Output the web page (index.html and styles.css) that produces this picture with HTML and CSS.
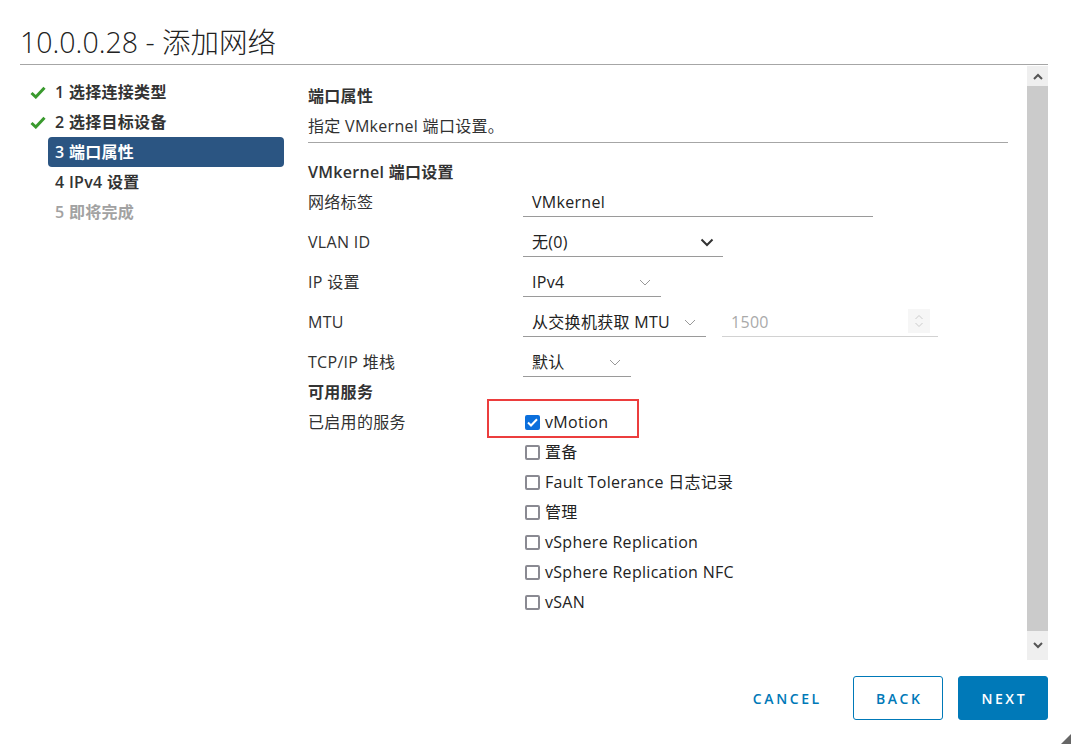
FILE: index.html
```html
<!DOCTYPE html>
<html lang="zh-CN">

<head>
	<meta charset="UTF-8">
	<title>10.0.0.28 - 添加网络</title>
	<link rel="stylesheet" href="styles.css">
</head>

<body>
	<div class="modal">
		<div class="modal-header">
			<h1>10.0.0.28 - 添加网络</h1>
		</div>

		<div class="wizard">
			<ul class="steps">
				<li class="step done">
					<span class="step-icon">
						<svg width="16" height="13" viewBox="0 0 16 13"><path d="M1.5 7 L5.8 11 L14.5 1.8" fill="none" stroke="#3a9a2e" stroke-width="3"/></svg>
					</span>
					<span class="step-label">1 选择连接类型</span>
				</li>
				<li class="step done">
					<span class="step-icon">
						<svg width="16" height="13" viewBox="0 0 16 13"><path d="M1.5 7 L5.8 11 L14.5 1.8" fill="none" stroke="#3a9a2e" stroke-width="3"/></svg>
					</span>
					<span class="step-label">2 选择目标设备</span>
				</li>
				<li class="step active">
					<span class="step-icon"></span>
					<span class="step-label">3 端口属性</span>
				</li>
				<li class="step">
					<span class="step-icon"></span>
					<span class="step-label">4 IPv4 设置</span>
				</li>
				<li class="step disabled">
					<span class="step-icon"></span>
					<span class="step-label">5 即将完成</span>
				</li>
			</ul>

			<div class="content">
				<div class="page-title">
					<div class="title-text">端口属性</div>
					<div>指定 VMkernel 端口设置。</div>
				</div>

				<div class="section-title">VMkernel 端口设置</div>

				<div class="form">
					<div class="form-row">
						<label>网络标签</label>
						<div class="field"><div class="input w-350">VMkernel</div></div>
					</div>
					<div class="form-row">
						<label>VLAN ID</label>
						<div class="field">
							<div class="select w-200">无(0)
								<svg class="chevron dark" width="14" height="9" viewBox="0 0 14 9"><path d="M1.5 1.5 L7 7 L12.5 1.5" fill="none" stroke="#333" stroke-width="2"/></svg>
							</div>
						</div>
					</div>
					<div class="form-row">
						<label>IP 设置</label>
						<div class="field">
							<div class="select w-138">IPv4
								<svg class="chevron" width="12" height="7" viewBox="0 0 12 7"><path d="M1 1 L6 6 L11 1" fill="none" stroke="#999" stroke-width="1"/></svg>
							</div>
						</div>
					</div>
					<div class="form-row">
						<label>MTU</label>
						<div class="field">
							<div class="select w-183">从交换机获取 MTU
								<svg class="chevron" width="12" height="7" viewBox="0 0 12 7"><path d="M1 1 L6 6 L11 1" fill="none" stroke="#999" stroke-width="1"/></svg>
							</div>
							<div class="input disabled w-216">1500
								<span class="spinner">
									<svg width="10" height="16" viewBox="0 0 10 16"><path d="M1.5 6 L5 2.5 L8.5 6 M1.5 10 L5 13.5 L8.5 10" fill="none" stroke="#ccc" stroke-width="1"/></svg>
								</span>
							</div>
						</div>
					</div>
					<div class="form-row">
						<label>TCP/IP 堆栈</label>
						<div class="field">
							<div class="select w-108">默认
								<svg class="chevron" width="12" height="7" viewBox="0 0 12 7"><path d="M1 1 L6 6 L11 1" fill="none" stroke="#999" stroke-width="1"/></svg>
							</div>
						</div>
					</div>
				</div>

				<div class="section-title">可用服务</div>

				<div class="services">
					<label>已启用的服务</label>
					<div class="checkbox-list">
						<div class="highlight"></div>
						<div class="checkbox checked">
							<span class="box">
								<svg width="11" height="9" viewBox="0 0 11 9"><path d="M1 4.5 L4 7.5 L10 1.2" fill="none" stroke="#fff" stroke-width="2"/></svg>
							</span>
							vMotion
						</div>
						<div class="checkbox"><span class="box"></span>置备</div>
						<div class="checkbox"><span class="box"></span>Fault Tolerance 日志记录</div>
						<div class="checkbox"><span class="box"></span>管理</div>
						<div class="checkbox"><span class="box"></span>vSphere Replication</div>
						<div class="checkbox"><span class="box"></span>vSphere Replication NFC</div>
						<div class="checkbox"><span class="box"></span>vSAN</div>
					</div>
				</div>
			</div>

			<div class="scrollbar">
				<div class="scroll-btn up">
					<svg width="10" height="7" viewBox="0 0 10 7"><path d="M1 6 L5 2 L9 6" fill="none" stroke="#555" stroke-width="2"/></svg>
				</div>
				<div class="scroll-thumb"></div>
				<div class="scroll-btn down">
					<svg width="10" height="7" viewBox="0 0 10 7"><path d="M1 1 L5 5 L9 1" fill="none" stroke="#555" stroke-width="2"/></svg>
				</div>
			</div>
		</div>

		<div class="modal-footer">
			<button class="btn btn-link">CANCEL</button>
			<button class="btn btn-outline">BACK</button>
			<button class="btn btn-primary">NEXT</button>
		</div>

		<svg class="resize-handle" width="10" height="10" viewBox="0 0 10 10"><path d="M10 0 L10 10 L0 10 Z" fill="#666"/></svg>
	</div>
</body>

</html>
```

FILE: styles.css
```css
* {
	margin: 0;
	padding: 0;
	box-sizing: border-box;
}

body {
	font-family: "Open Sans", "Noto Sans CJK SC", sans-serif;
	background: white;
	color: #313131;
	font-size: 16px;
	letter-spacing: 0.3px;
}

.modal {
	position: relative;
	width: 1071px;
	height: 744px;
	overflow: hidden;
}

.modal-header {
	margin: 0 23px 0 20px;
	padding-top: 20px;
	height: 65px;
	border-bottom: 1px solid #a6a6a6;
}

.modal-header h1 {
	font-size: 28.5px;
	font-weight: 300;
	line-height: 44px;
	color: #222;
	letter-spacing: 0;
}

.wizard {
	display: flex;
	height: 595px;
	margin: 0 23px 0 20px;
}

/* steps navigation */
.steps {
	list-style: none;
	width: 264px;
	padding-top: 12px;
}

.step {
	display: flex;
	align-items: center;
	height: 30px;
	font-weight: 600;
	color: #333;
}

.step-icon {
	width: 28px;
	padding-left: 10px;
	display: flex;
	align-items: center;
}

.step-label {
	flex: 1;
	height: 30px;
	line-height: 30px;
	padding-left: 7px;
	border-radius: 4px;
}

.step.active .step-label {
	background: #2b5582;
	color: white;
}

.step.disabled {
	color: #a2a2a2;
}

/* main content */
.content {
	flex: 1;
	padding: 16px 19px 0 24px;
}

.page-title {
	line-height: 30px;
	padding-bottom: 1px;
	border-bottom: 1px solid #a6a6a6;
}

.title-text,
.section-title {
	font-weight: 600;
	color: #333;
}

.section-title {
	line-height: 30px;
}

.page-title + .section-title {
	margin-top: 14px;
}

.form-row {
	display: flex;
	height: 30px;
	line-height: 30px;
	margin-bottom: 10px;
}

.form-row:last-child {
	margin-bottom: 0;
}

.form-row label,
.services label {
	width: 215px;
}

.field {
	display: flex;
	gap: 16px;
}

.input,
.select {
	position: relative;
	height: 30px;
	padding-left: 9px;
	border-bottom: 1px solid #9a9a9a;
	color: #222;
	white-space: nowrap;
}

.input.disabled {
	color: #aaa;
	border-bottom-color: #d2d2d2;
}

.chevron {
	position: absolute;
	right: 10px;
	top: 12px;
}

.chevron.dark {
	right: 9px;
	top: 11px;
}

.spinner {
	position: absolute;
	right: 8px;
	top: 2px;
	width: 22px;
	height: 24px;
	background: #f6f6f6;
	display: flex;
	align-items: center;
	justify-content: center;
}

.w-350 { width: 350px; }
.w-200 { width: 200px; }
.w-138 { width: 138px; }
.w-183 { width: 183px; }
.w-216 { width: 216px; }
.w-108 { width: 108px; }

/* services */
.services {
	display: flex;
	line-height: 30px;
}

.checkbox-list {
	position: relative;
	padding-left: 2px;
}

.checkbox {
	display: flex;
	align-items: center;
	height: 30px;
	color: #222;
}

.box {
	width: 15px;
	height: 15px;
	border: 2px solid #8a8a92;
	border-radius: 2px;
	margin-right: 5px;
	display: flex;
	align-items: center;
	justify-content: center;
}

.checkbox.checked .box {
	background: #0b6fdc;
	border-color: #0b6fdc;
}

.highlight {
	position: absolute;
	left: -36px;
	top: -8px;
	width: 152px;
	height: 39px;
	border: 2px solid #ec3d3d;
}

/* scrollbar */
.scrollbar {
	width: 21px;
	margin-top: 1px;
	display: flex;
	flex-direction: column;
	background: #cbcbcb;
}

.scroll-btn {
	display: flex;
	align-items: center;
	justify-content: center;
	background: #efefef;
}

.scroll-btn.up {
	height: 20px;
}

.scroll-btn.down {
	height: 29px;
}

.scroll-thumb {
	flex: 1;
}

/* footer */
.modal-footer {
	display: flex;
	justify-content: flex-end;
	gap: 15px;
	margin: 16px 23px 0 0;
}

.btn {
	height: 44px;
	width: 90px;
	font-family: "Open Sans", sans-serif;
	font-size: 14px;
	font-weight: 600;
	letter-spacing: 2.6px;
	text-indent: 2.6px;
	border-radius: 3px;
	border: 1px solid #0079b8;
	background: white;
	color: #0079b8;
	cursor: pointer;
}

.btn-link {
	border-color: transparent;
	margin-right: 7px;
}

.btn-primary {
	background: #0079b8;
	color: white;
}

.resize-handle {
	position: absolute;
	right: 0;
	bottom: 0;
}
```
